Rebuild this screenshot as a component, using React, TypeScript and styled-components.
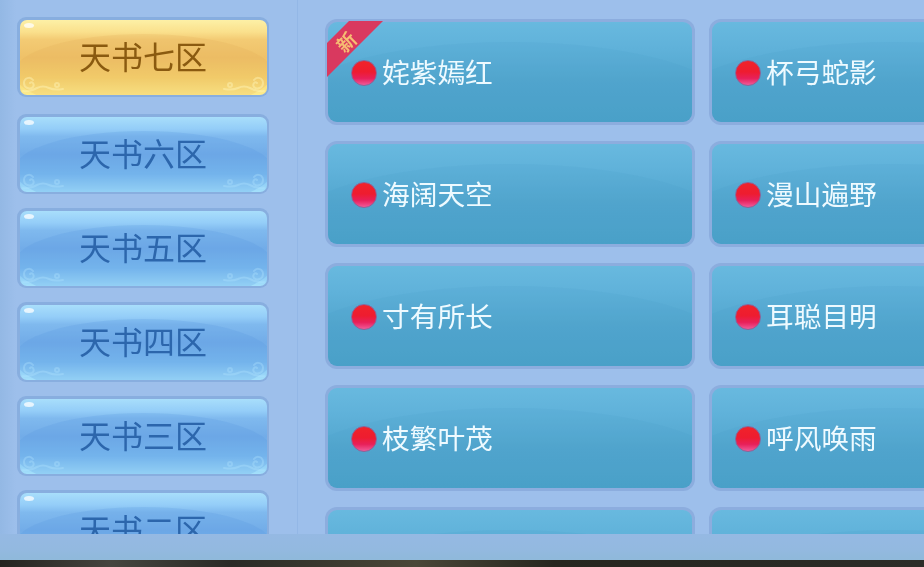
import React from "react";
import styled, { createGlobalStyle } from "styled-components";

const Global = createGlobalStyle`
  html, body { margin: 0; padding: 0; width: 924px; height: 567px; overflow: hidden; background: #2b2a26; }
  * { box-sizing: border-box; }
`;

const Page = styled.div`
  width: 924px;
  height: 567px;
  display: flex;
  flex-direction: column;
  overflow: hidden;
  font-family: "Noto Sans CJK SC", "Noto Sans", sans-serif;
  background: linear-gradient(90deg, #93b8e4 0, #9dbfeb 16px, #9dbfeb 100%);
  filter: blur(0.45px);
`;

const Main = styled.div`
  height: 534px;
  display: flex;
  overflow: hidden;
`;

const Sidebar = styled.div`
  width: 298px;
  flex: none;
  padding: 17px 0 0 17px;
  display: flex;
  flex-direction: column;
  gap: 14px;
  overflow: hidden;
  border-right: 1px solid #93b7e6;
`;

const ZoneButton = styled.div<{ $active?: boolean }>`
  position: relative;
  flex: none;
  width: 252px;
  height: 80px;
  margin-bottom: ${(p) => (p.$active ? "3px" : "0")};
  border-radius: 9px;
  padding: 2.5px;
  background: #88aedf;
`;

const ZoneFace = styled.div<{ $active?: boolean }>`
  position: relative;
  height: 100%;
  border-radius: 7px;
  overflow: hidden;
  display: flex;
  align-items: center;
  justify-content: center;
  font-size: 32px;
  line-height: 1;
  color: ${(p) => (p.$active ? "#8a5a10" : "#2c66ac")};
  background: ${(p) =>
    p.$active
      ? "linear-gradient(180deg, #fdf0a6 0, #fae08c 12px, #f3cb74 26%, #efc168 50%, #f5d26e 76%, #fdec8c 100%)"
      : "linear-gradient(180deg, #a8defb 0, #94cdf8 12px, #7fb9ee 26%, #72ace8 50%, #7cbcf0 76%, #a4e0fb 100%)"};
  &::before {
    content: "";
    position: absolute;
    left: -6px;
    right: -6px;
    top: 14px;
    height: 78px;
    border-radius: 50%;
    background: ${(p) => (p.$active ? "rgba(226, 170, 84, 0.2)" : "rgba(88, 150, 222, 0.22)")};
  }
  &::after {
    content: "";
    position: absolute;
    left: 4px;
    top: 3px;
    width: 10px;
    height: 5px;
    border-radius: 50%;
    background: rgba(255, 255, 255, 0.75);
  }
`;

const ZoneLabel = styled.span`
  position: relative;
  z-index: 1;
  margin-top: -5px;
`;

const Swirl = styled.svg<{ $right?: boolean }>`
  position: absolute;
  bottom: 1px;
  ${(p) => (p.$right ? "right: 1px; transform: scaleX(-1);" : "left: 1px;")}
  width: 46px;
  height: 22px;
  fill: none;
  stroke-linecap: round;
`;

const Board = styled.div`
  flex: 1;
  min-width: 0;
  padding: 19px 0 0 27px;
  display: grid;
  grid-template-columns: 370px 370px;
  grid-auto-rows: 106px;
  column-gap: 14px;
  row-gap: 16px;
  overflow: hidden;
`;

const Server = styled.div`
  position: relative;
  border-radius: 12px;
  padding: 3px;
  background: #8cadde;
`;

const ServerFace = styled.div`
  position: relative;
  height: 100%;
  padding-left: 23px;
  border-radius: 9px;
  overflow: hidden;
  display: flex;
  align-items: center;
  gap: 5px;
  color: #eefaff;
  font-size: 27.7px;
  line-height: 1;
  background: linear-gradient(180deg, #68b9df 0, #60b2da 25%, #52a6ce 60%, #4aa1c9 100%);
  &::before {
    content: "";
    position: absolute;
    left: -40px;
    right: -40px;
    top: 20px;
    height: 130px;
    border-radius: 50%;
    background: rgba(72, 156, 200, 0.14);
  }
`;

const Dot = styled.span`
  position: relative;
  flex: none;
  width: 26px;
  height: 26px;
  margin-top: 2px;
  border-radius: 50%;
  border: 1.5px solid #8f6296;
  background: linear-gradient(180deg, #f0232a 0, #ee1c30 45%, #e8205a 72%, #f05a9a 100%);
`;

const ServerName = styled.span`
  position: relative;
`;

const Ribbon = styled.svg`
  position: absolute;
  left: 2px;
  top: 2px;
  width: 60px;
  height: 60px;
  z-index: 2;
`;

const RibbonTag = styled.span`
  position: absolute;
  left: 10px;
  top: 12px;
  width: 20px;
  height: 20px;
  z-index: 3;
  display: flex;
  align-items: center;
  justify-content: center;
  transform: rotate(-45deg);
  font-size: 19px;
  font-weight: 700;
  line-height: 1;
  color: #f6bd72;
`;

const Footer = styled.div`
  height: 26px;
  flex: none;
  background: linear-gradient(180deg, #95b9e3 0, #93b9e0 60%, #8fb9da 100%);
`;

const Ground = styled.div`
  flex: 1;
  background: linear-gradient(90deg, #23231f 0, #45453f 12%, #2a2a26 25%, #4a4738 45%, #26261f 60%, #2c2c28 100%);
`;

const zones = ["天书七区", "天书六区", "天书五区", "天书四区", "天书三区", "天书二区"];
const servers: [string, string][] = [
  ["姹紫嫣红", "杯弓蛇影"],
  ["海阔天空", "漫山遍野"],
  ["寸有所长", "耳聪目明"],
  ["枝繁叶茂", "呼风唤雨"],
  ["", ""],
];

function Curl({ right, active }: { right?: boolean; active?: boolean }) {
  const c = active ? "rgba(255,248,190,0.42)" : "rgba(180,230,255,0.34)";
  return (
    <Swirl $right={right} viewBox="0 0 46 22" stroke={c} strokeWidth="2">
      <path d="M12 8c-3-4-9-2-9 3s6 7 9 4c2-3-1-6-3-4" />
      <path d="M2 19c6 1 10-1 14-3s8-2 12 0 8 2 14 1" />
      <circle cx="36" cy="13" r="2" />
    </Swirl>
  );
}

export default function App() {
  return (
    <Page>
      <Global />
      <Main>
        <Sidebar>
          {zones.map((z, i) => (
            <ZoneButton key={z} $active={i === 0}>
              <ZoneFace $active={i === 0}>
                <Curl active={i === 0} />
                <Curl right active={i === 0} />
                <ZoneLabel>{z}</ZoneLabel>
              </ZoneFace>
            </ZoneButton>
          ))}
        </Sidebar>
        <Board>
          {servers.flat().map((name, i) => (
            <Server key={i}>
              <ServerFace>
                {name && <Dot />}
                {name && <ServerName>{name}</ServerName>}
              </ServerFace>
              {i === 0 && (
                <>
                  <Ribbon viewBox="0 0 60 60">
                    <polygon points="22,0 56,0 0,56 0,22" fill="#d9395f" />
                  </Ribbon>
                  <RibbonTag>新</RibbonTag>
                </>
              )}
            </Server>
          ))}
        </Board>
      </Main>
      <Footer />
      <Ground />
    </Page>
  );
}
